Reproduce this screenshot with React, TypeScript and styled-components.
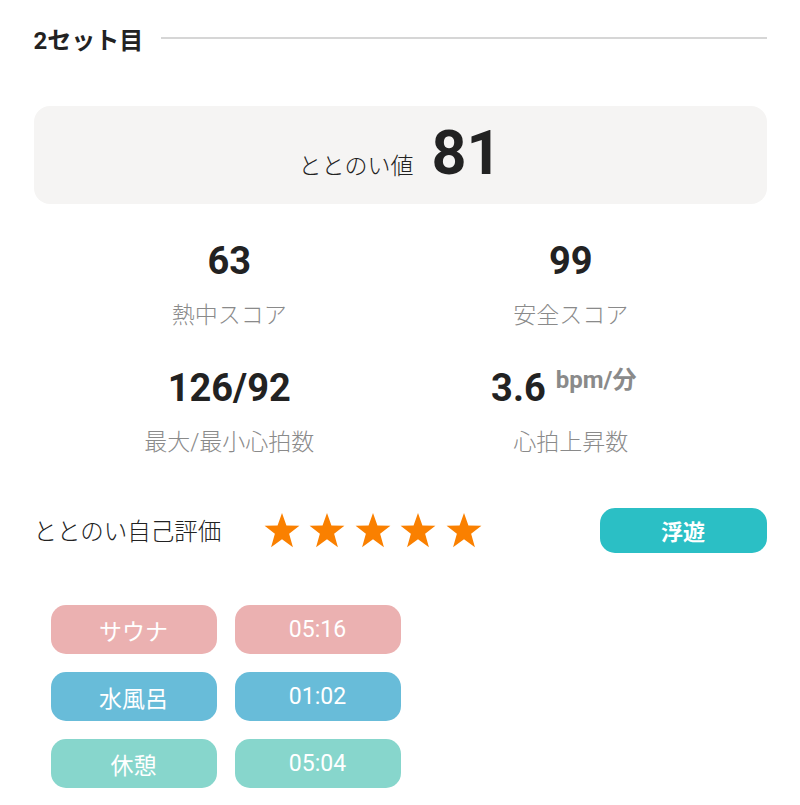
import React from 'react'
import styled, {createGlobalStyle} from 'styled-components'

const GlobalStyle = createGlobalStyle`
  body {
    margin: 0;
    background: #ffffff;
    font-family: Roboto, "Noto Sans CJK JP", sans-serif;
    color: #222222;
  }
`

type Stat = {value: string; unit?: string; label: string}

const stats: Stat[] = [
  {value: '63', label: '熱中スコア'},
  {value: '99', label: '安全スコア'},
  {value: '126/92', label: '最大/最小心拍数'},
  {value: '3.6', unit: 'bpm/分', label: '心拍上昇数'},
]

type Tone = 'sauna' | 'water' | 'rest'

const phases: {name: string; time: string; tone: Tone}[] = [
  {name: 'サウナ', time: '05:16', tone: 'sauna'},
  {name: '水風呂', time: '01:02', tone: 'water'},
  {name: '休憩', time: '05:04', tone: 'rest'},
]

const toneColor: Record<Tone, string> = {
  sauna: '#ebb1b1',
  water: '#68bcd9',
  rest: '#87d6cc',
}

const Star: React.FC = () => (
  <svg width="38" height="37" viewBox="0 0 24 23">
    <polygon
      points="12,0.5 14.8,8.3 23,8.5 16.5,13.6 18.9,22 12,17.1 5.1,22 7.5,13.6 1,8.5 9.2,8.3"
      fill="#fa8000"
    />
  </svg>
)

const App: React.FC = () => {
  return (
    <>
      <GlobalStyle />
      <StyledPage>
        <StyledHeader>
          <StyledHeading>2セット目</StyledHeading>
          <StyledRule />
        </StyledHeader>

        <StyledScoreCard>
          <StyledScoreLabel>ととのい値</StyledScoreLabel>
          <StyledScoreValue>81</StyledScoreValue>
        </StyledScoreCard>

        <StyledStatsGrid>
          {stats.map((s) => (
            <StyledStat key={s.label}>
              <StyledStatValue shifted={!!s.unit}>
                {s.value}
                {s.unit && <StyledUnit>{s.unit}</StyledUnit>}
              </StyledStatValue>
              <StyledStatLabel>{s.label}</StyledStatLabel>
            </StyledStat>
          ))}
        </StyledStatsGrid>

        <StyledRatingRow>
          <StyledRatingLabel>ととのい自己評価</StyledRatingLabel>
          <StyledStars>
            {[0, 1, 2, 3, 4].map((i) => (
              <Star key={i} />
            ))}
          </StyledStars>
          <StyledMoodButton>浮遊</StyledMoodButton>
        </StyledRatingRow>

        <StyledPhaseGrid>
          {phases.map((p) => (
            <React.Fragment key={p.name}>
              <StyledPill tone={p.tone}>{p.name}</StyledPill>
              <StyledPill tone={p.tone}>{p.time}</StyledPill>
            </React.Fragment>
          ))}
        </StyledPhaseGrid>
      </StyledPage>
    </>
  )
}

const StyledPage = styled.div`
  width: 733px;
  margin: 0 auto;
  padding: 0 0 20px 0;
  display: flex;
  flex-direction: column;
`

const StyledHeader = styled.div`
  display: flex;
  align-items: center;
  gap: 18px;
  height: 30px;
  margin-top: 23px;
`

const StyledHeading = styled.h2`
  margin: 0;
  font-size: 24px;
  font-weight: 700;
  color: #222222;
  white-space: nowrap;
`

const StyledRule = styled.div`
  flex: 1;
  height: 2px;
  background: #d6d6d6;
`

const StyledScoreCard = styled.div`
  margin-top: 53px;
  height: 98px;
  border-radius: 16px;
  background: #f5f4f3;
  display: flex;
  justify-content: center;
  align-items: baseline;
  gap: 18px;
  line-height: 94px;
`

const StyledScoreLabel = styled.span`
  font-size: 23px;
  font-weight: 300;
  color: #222222;
`

const StyledScoreValue = styled.span`
  font-size: 61px;
  font-weight: 700;
  color: #222222;
`

const StyledStatsGrid = styled.div`
  margin: 35px 25px 0;
  display: grid;
  grid-template-columns: 1fr 1fr;
  row-gap: 34px;
`

const StyledStat = styled.div`
  display: flex;
  flex-direction: column;
  align-items: center;
`

const StyledStatValue = styled.div<{shifted: boolean}>`
  display: flex;
  align-items: flex-start;
  gap: 10px;
  font-size: 38px;
  line-height: 44px;
  font-weight: 700;
  color: #222222;
  margin-right: ${(props) => (props.shifted ? '14px' : '0')};
`

const StyledUnit = styled.span`
  font-size: 24px;
  line-height: 28px;
  font-weight: 700;
  color: #8a8a8a;
  white-space: nowrap;
`

const StyledStatLabel = styled.div`
  margin-top: 17px;
  font-size: 23px;
  line-height: 32px;
  font-weight: 300;
  color: #8a8a8a;
`

const StyledRatingRow = styled.div`
  margin-top: 48px;
  height: 46px;
  display: flex;
  align-items: center;
`

const StyledRatingLabel = styled.div`
  font-size: 23.5px;
  font-weight: 300;
  color: #222222;
  width: 229px;
`

const StyledStars = styled.div`
  display: flex;
  gap: 7.5px;
  flex: 1;
`

const StyledMoodButton = styled.div`
  width: 167px;
  height: 45px;
  border-radius: 15px;
  background: #2bbfc5;
  color: #ffffff;
  font-size: 22px;
  font-weight: 700;
  display: flex;
  align-items: center;
  justify-content: center;
`

const StyledPhaseGrid = styled.div`
  margin: 52px 0 0 17px;
  display: grid;
  grid-template-columns: 166px 166px;
  column-gap: 18px;
  row-gap: 18px;
`

const StyledPill = styled.div<{tone: Tone}>`
  height: 49px;
  border-radius: 15px;
  background: ${(props) => toneColor[props.tone]};
  color: #ffffff;
  font-size: 23px;
  display: flex;
  align-items: center;
  justify-content: center;
`

export default App
